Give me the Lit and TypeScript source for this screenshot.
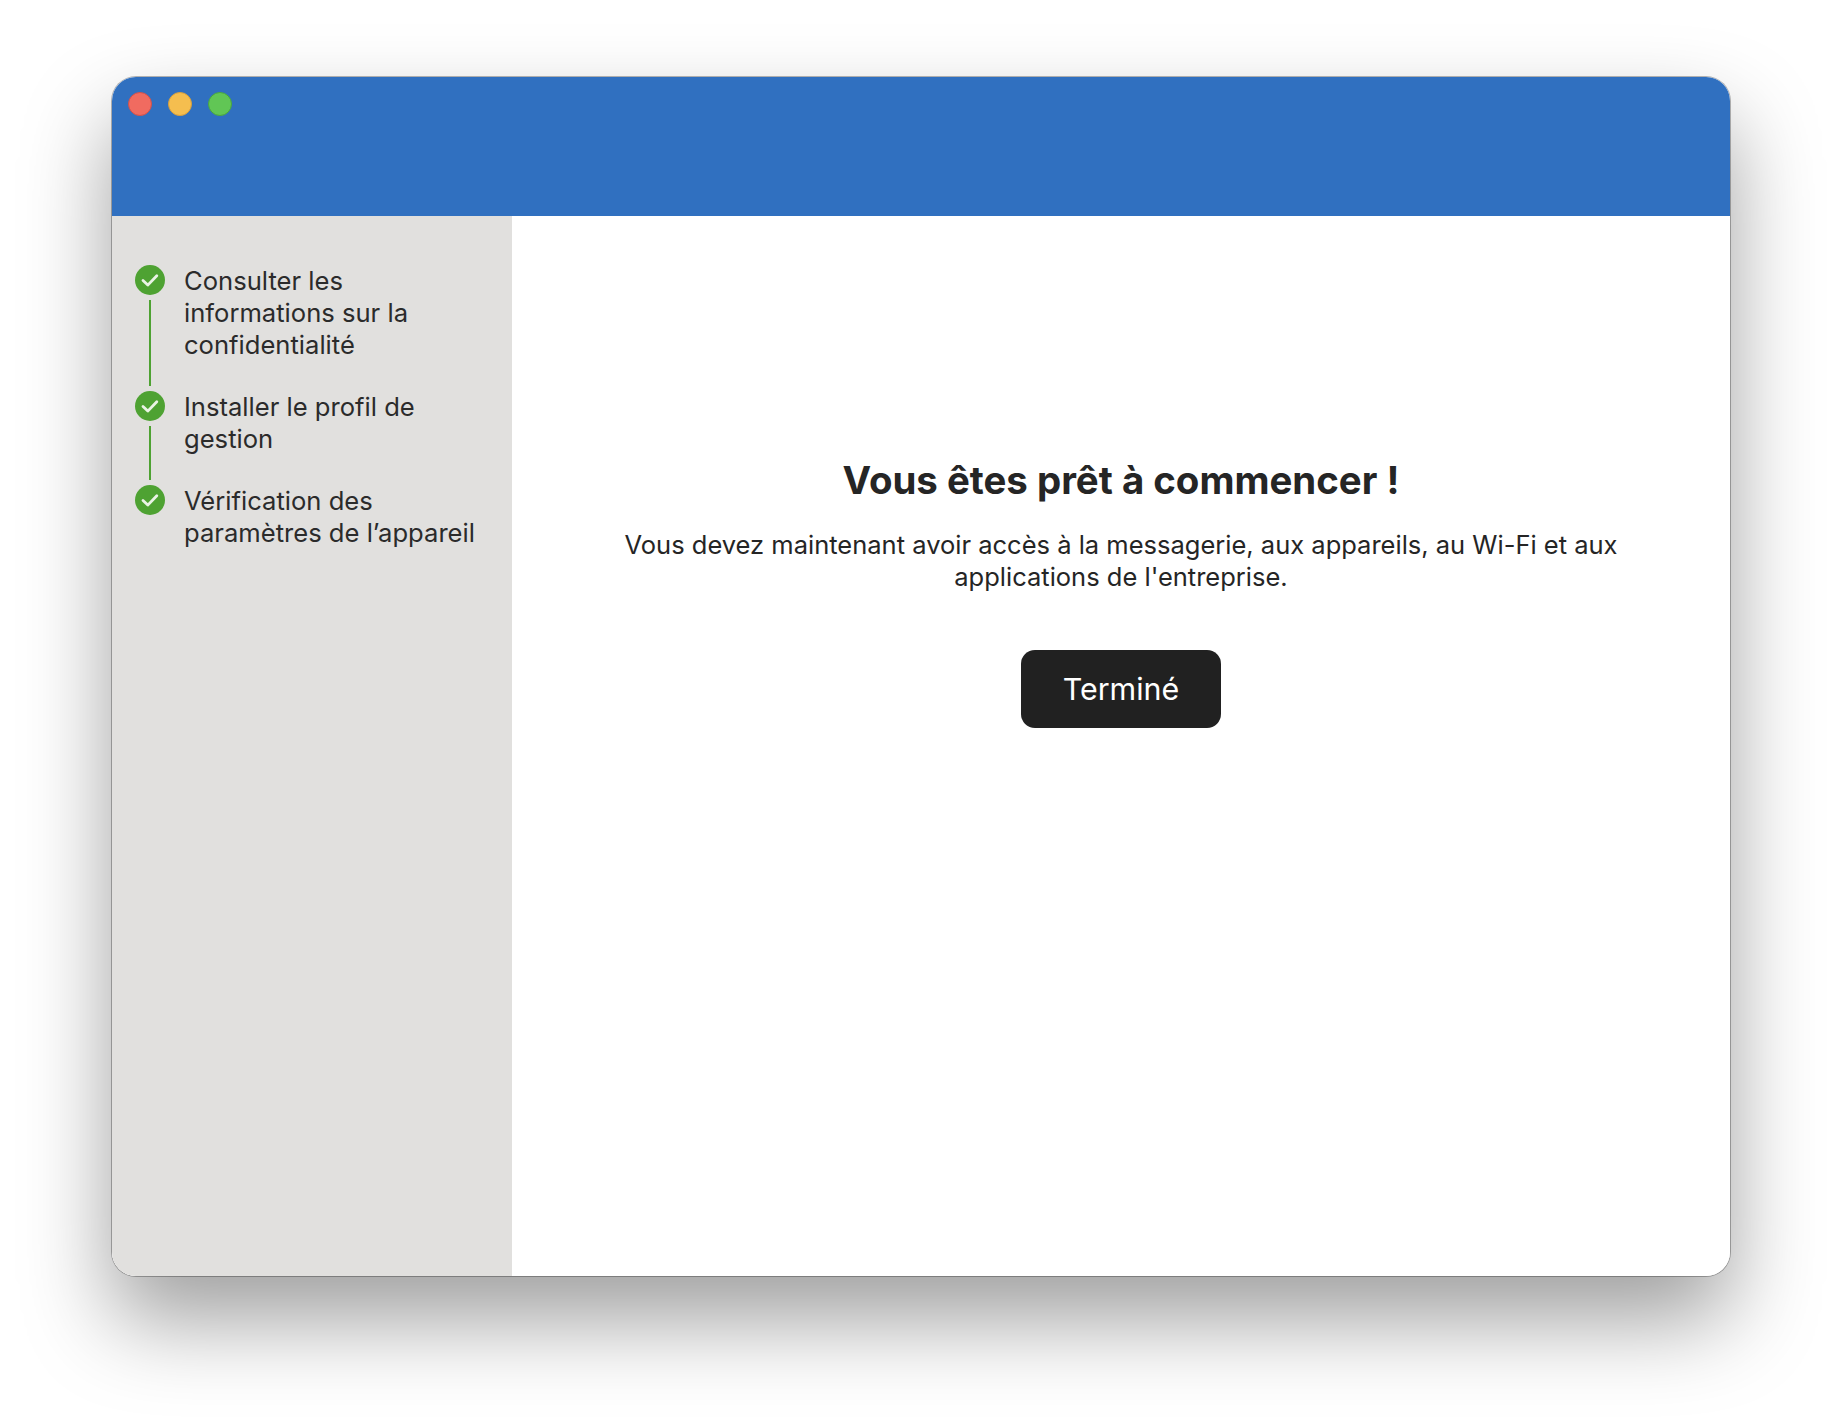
import { LitElement, html, css, svg } from "lit";
import { customElement } from "lit/decorators.js";

const steps = [
  "Consulter les informations sur la confidentialité",
  "Installer le profil de gestion",
  "Vérification des paramètres de l’appareil",
];

@customElement("app-root")
export class AppRoot extends LitElement {
  static styles = css`
    :host {
      display: block;
      width: 1842px;
      height: 1424px;
      box-sizing: border-box;
      padding: 77px 112px 148px;
      background: #fff;
      font-family: Inter, "Liberation Sans", sans-serif;
      color: #252525;
    }
    .window {
      height: 1199px;
      display: flex;
      flex-direction: column;
      border-radius: 24px;
      overflow: hidden;
      background: #fff;
    }
    .frame {
      height: 1199px;
      border-radius: 24px;
      box-shadow: 0 0 0 1px rgba(0, 0, 0, 0.28), 0 44px 88px rgba(0, 0, 0, 0.38);
    }
    .header {
      height: 139px;
      flex: none;
      background: #3070c0;
      display: flex;
      gap: 16px;
      padding: 15px 16px 0;
      box-sizing: border-box;
    }
    .light {
      width: 24px;
      height: 24px;
      box-sizing: border-box;
      border-radius: 50%;
      border: 1px solid;
    }
    .red { background: #f06b60; border-color: #d2514a; }
    .yellow { background: #f5be4f; border-color: #d89f3c; }
    .green { background: #61c655; border-color: #4aa63f; }
    .body {
      flex: 1;
      display: flex;
      min-height: 0;
    }
    .side {
      width: 400px;
      flex: none;
      box-sizing: border-box;
      background: #e1e0de;
      padding: 49px 24px 0 23px;
    }
    .step {
      display: flex;
      gap: 19px;
    }
    .rail {
      width: 30px;
      flex: none;
      display: flex;
      flex-direction: column;
      align-items: center;
    }
    .rail svg {
      display: block;
      flex: none;
    }
    .line {
      flex: 1;
      width: 2px;
      margin: 5px 0;
      background: #4ea232;
    }
    .label {
      font-size: 25.6px;
      line-height: 32px;
      padding-bottom: 30px;
      color: #2b2b2b;
    }
    .step:last-child .label { padding-bottom: 0; }
    .main {
      flex: 1;
      display: flex;
      flex-direction: column;
      align-items: center;
      padding: 237px 100px 0;
      text-align: center;
      min-width: 0;
    }
    h1 {
      margin: 0;
      font-size: 38.4px;
      line-height: 54px;
      font-weight: 700;
      color: #252525;
    }
    p {
      margin: 22px 0 0;
      font-size: 25.5px;
      line-height: 32px;
      color: #252525;
    }
    button {
      margin-top: 57px;
      width: 200px;
      height: 78px;
      border: none;
      border-radius: 14px;
      background: #212121;
      color: #fff;
      font: 400 30.4px Inter, "Liberation Sans", sans-serif;
    }
  `;

  private check() {
    return svg`<svg width="30" height="30" viewBox="0 0 30 30">
      <circle cx="15" cy="15" r="15" fill="#4ea232"></circle>
      <path d="M8 15.5l4.8 4.6 9-9.4" fill="none" stroke="#eaf3e5" stroke-width="2.8" stroke-linecap="round" stroke-linejoin="round"></path>
    </svg>`;
  }

  render() {
    return html`
      <div class="frame">
        <div class="window">
          <div class="header">
            <div class="light red"></div>
            <div class="light yellow"></div>
            <div class="light green"></div>
          </div>
          <div class="body">
            <div class="side">
              ${steps.map(
                (s, i) => html`<div class="step">
                  <div class="rail">
                    ${this.check()}
                    ${i < steps.length - 1 ? html`<div class="line"></div>` : ""}
                  </div>
                  <div class="label">${s}</div>
                </div>`
              )}
            </div>
            <div class="main">
              <h1>Vous êtes prêt à commencer !</h1>
              <p>Vous devez maintenant avoir accès à la messagerie, aux appareils, au Wi-Fi et aux applications de l'entreprise.</p>
              <button>Terminé</button>
            </div>
          </div>
        </div>
      </div>
    `;
  }
}
